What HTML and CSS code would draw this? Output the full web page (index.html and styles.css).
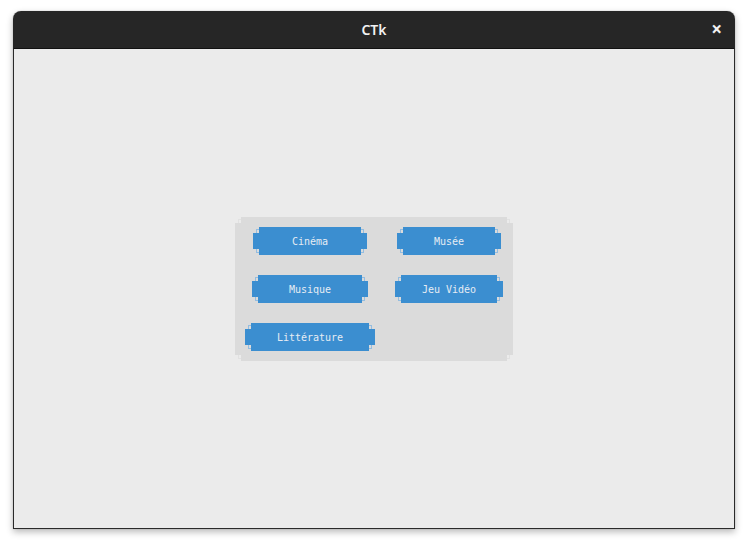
FILE: index.html
```html
<!DOCTYPE html>
<html lang="fr">
<head>
<meta charset="utf-8">
<title>CTk</title>
<link rel="stylesheet" href="styles.css">
</head>
<body>
<div class="window">
  <div class="titlebar">
    <span class="title">CTk</span>
    <span class="close">×</span>
  </div>
  <div class="content">
    <div class="panel">
      <div class="grid">
        <div class="btn w114"><span class="label">Cinéma</span></div>
        <div class="btn w104"><span class="label">Musée</span></div>
        <div class="btn w116"><span class="label">Musique</span></div>
        <div class="btn w108"><span class="label">Jeu Vidéo</span></div>
        <div class="btn w130"><span class="label">Littérature</span></div>
      </div>
    </div>
  </div>
</div>
</body>
</html>
```

FILE: styles.css
```css
html, body {
  margin: 0;
  padding: 0;
  background: #ffffff;
}
body {
  width: 748px;
  height: 546px;
  overflow: hidden;
}
.window {
  margin: 11px 0 0 13px;
  width: 722px;
  height: 518px;
  display: flex;
  flex-direction: column;
  border-radius: 8px 8px 0 0;
  box-shadow: 0 3px 7px rgba(0, 0, 0, 0.28), 0 0 1px rgba(0, 0, 0, 0.4);
}
.titlebar {
  height: 37px;
  flex: none;
  background: #262626;
  border-radius: 8px 8px 0 0;
  position: relative;
  display: flex;
  align-items: center;
  justify-content: center;
  font-family: "Noto Sans", "Open Sans", sans-serif;
  color: #f2f2f2;
}
.title {
  font-size: 14px;
  font-weight: 600;
}
.close {
  position: absolute;
  right: 13px;
  top: 8px;
  font-size: 19px;
  font-weight: 700;
  line-height: 20px;
}
.content {
  flex: 1;
  background: #ebebeb;
  border: 1px solid #2a2a2a;
  border-top: 1px solid #111;
  display: flex;
  align-items: center;
  justify-content: center;
}
.panel {
  position: relative;
  isolation: isolate;
  padding: 10px;
}
.panel::before {
  content: "";
  position: absolute;
  inset: 2px 3px;
  border: 1px solid #e1e1e1;
  z-index: 0;
}
.panel::after {
  content: "";
  position: absolute;
  inset: 0;
  background:
    linear-gradient(#dbdbdb, #dbdbdb) center / calc(100% - 12px) 100% no-repeat,
    linear-gradient(#dbdbdb, #dbdbdb) center / 100% calc(100% - 12px) no-repeat;
  z-index: 1;
}
.grid {
  position: relative;
  z-index: 2;
  display: grid;
  grid-template-columns: 130px 108px;
  column-gap: 20px;
  row-gap: 20px;
  justify-items: center;
}
.btn {
  position: relative;
  isolation: isolate;
  height: 28px;
  display: flex;
  align-items: center;
  justify-content: center;
  font-family: "DejaVu Sans Mono", "Liberation Mono", monospace;
  font-size: 10px;
  color: #e6ecf3;
}
.btn::before {
  content: "";
  position: absolute;
  inset: 2px 3px;
  border: 1px solid #94bde0;
  z-index: 0;
}
.btn::after {
  content: "";
  position: absolute;
  inset: 0;
  background:
    linear-gradient(#3b8ed0, #3b8ed0) center / calc(100% - 12px) 100% no-repeat,
    linear-gradient(#3b8ed0, #3b8ed0) center / 100% calc(100% - 12px) no-repeat;
  z-index: 1;
}
.label {
  position: relative;
  z-index: 2;
  line-height: 12px;
  padding-top: 2px;
}
.w114 { width: 114px; }
.w104 { width: 104px; }
.w116 { width: 116px; }
.w108 { width: 108px; }
.w130 { width: 130px; }
```
